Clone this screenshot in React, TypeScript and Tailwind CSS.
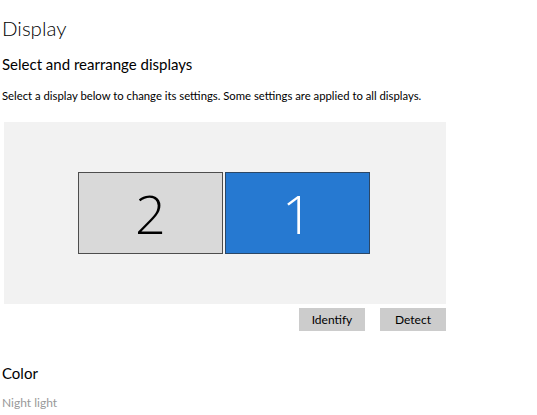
import React from 'react';

const font = { fontFamily: 'Lato, "Open Sans", sans-serif' };

function Monitor({ n, active }: { n: string; active?: boolean }) {
  return (
    <div
      className={`flex h-[82px] w-[145px] items-center justify-center border ${
        active ? 'border-[#2b4766] bg-[#2679d1] text-white' : 'border-[#4d4d4d] bg-[#d9d9d9] text-black'
      }`}
      style={{ fontFamily: '"Open Sans", sans-serif' }}
    >
      <span className="text-[54px] font-light leading-none">{n}</span>
    </div>
  );
}

export default function App() {
  return (
    <div className="min-h-[415px] w-[537px] bg-white text-black" style={font}>
      <div className="pl-[2px] pt-[13px]">
        <h1 className="text-[20.5px] font-light leading-[30px]">Display</h1>
        <h2 className="mt-[11px] text-[15px] leading-[20px]">Select and rearrange displays</h2>
        <p className="mt-[14px] text-[11.3px] leading-[16px]">
          Select a display below to change its settings. Some settings are applied to all displays.
        </p>
      </div>

      {/* arrangement canvas */}
      <div className="ml-[4px] mt-[18px] flex h-[182px] w-[442px] items-center bg-[#f2f2f2] pl-[74px]">
        <div className="flex gap-[2px]">
          <Monitor n="2" />
          <Monitor n="1" active />
        </div>
      </div>

      <div className="mt-[4px] flex w-[446px] justify-end gap-[15px]">
        <button className="h-[23px] w-[66px] bg-[#cccccc] text-[12px]">Identify</button>
        <button className="h-[23px] w-[66px] bg-[#cccccc] text-[12px]">Detect</button>
      </div>

      <div className="pl-[2px]">
        <h2 className="mt-[32px] text-[15px] leading-[20px]">Color</h2>
        <p className="mt-[12px] text-[12px] leading-[16px] text-[#999999]">Night light</p>
      </div>
    </div>
  );
}
